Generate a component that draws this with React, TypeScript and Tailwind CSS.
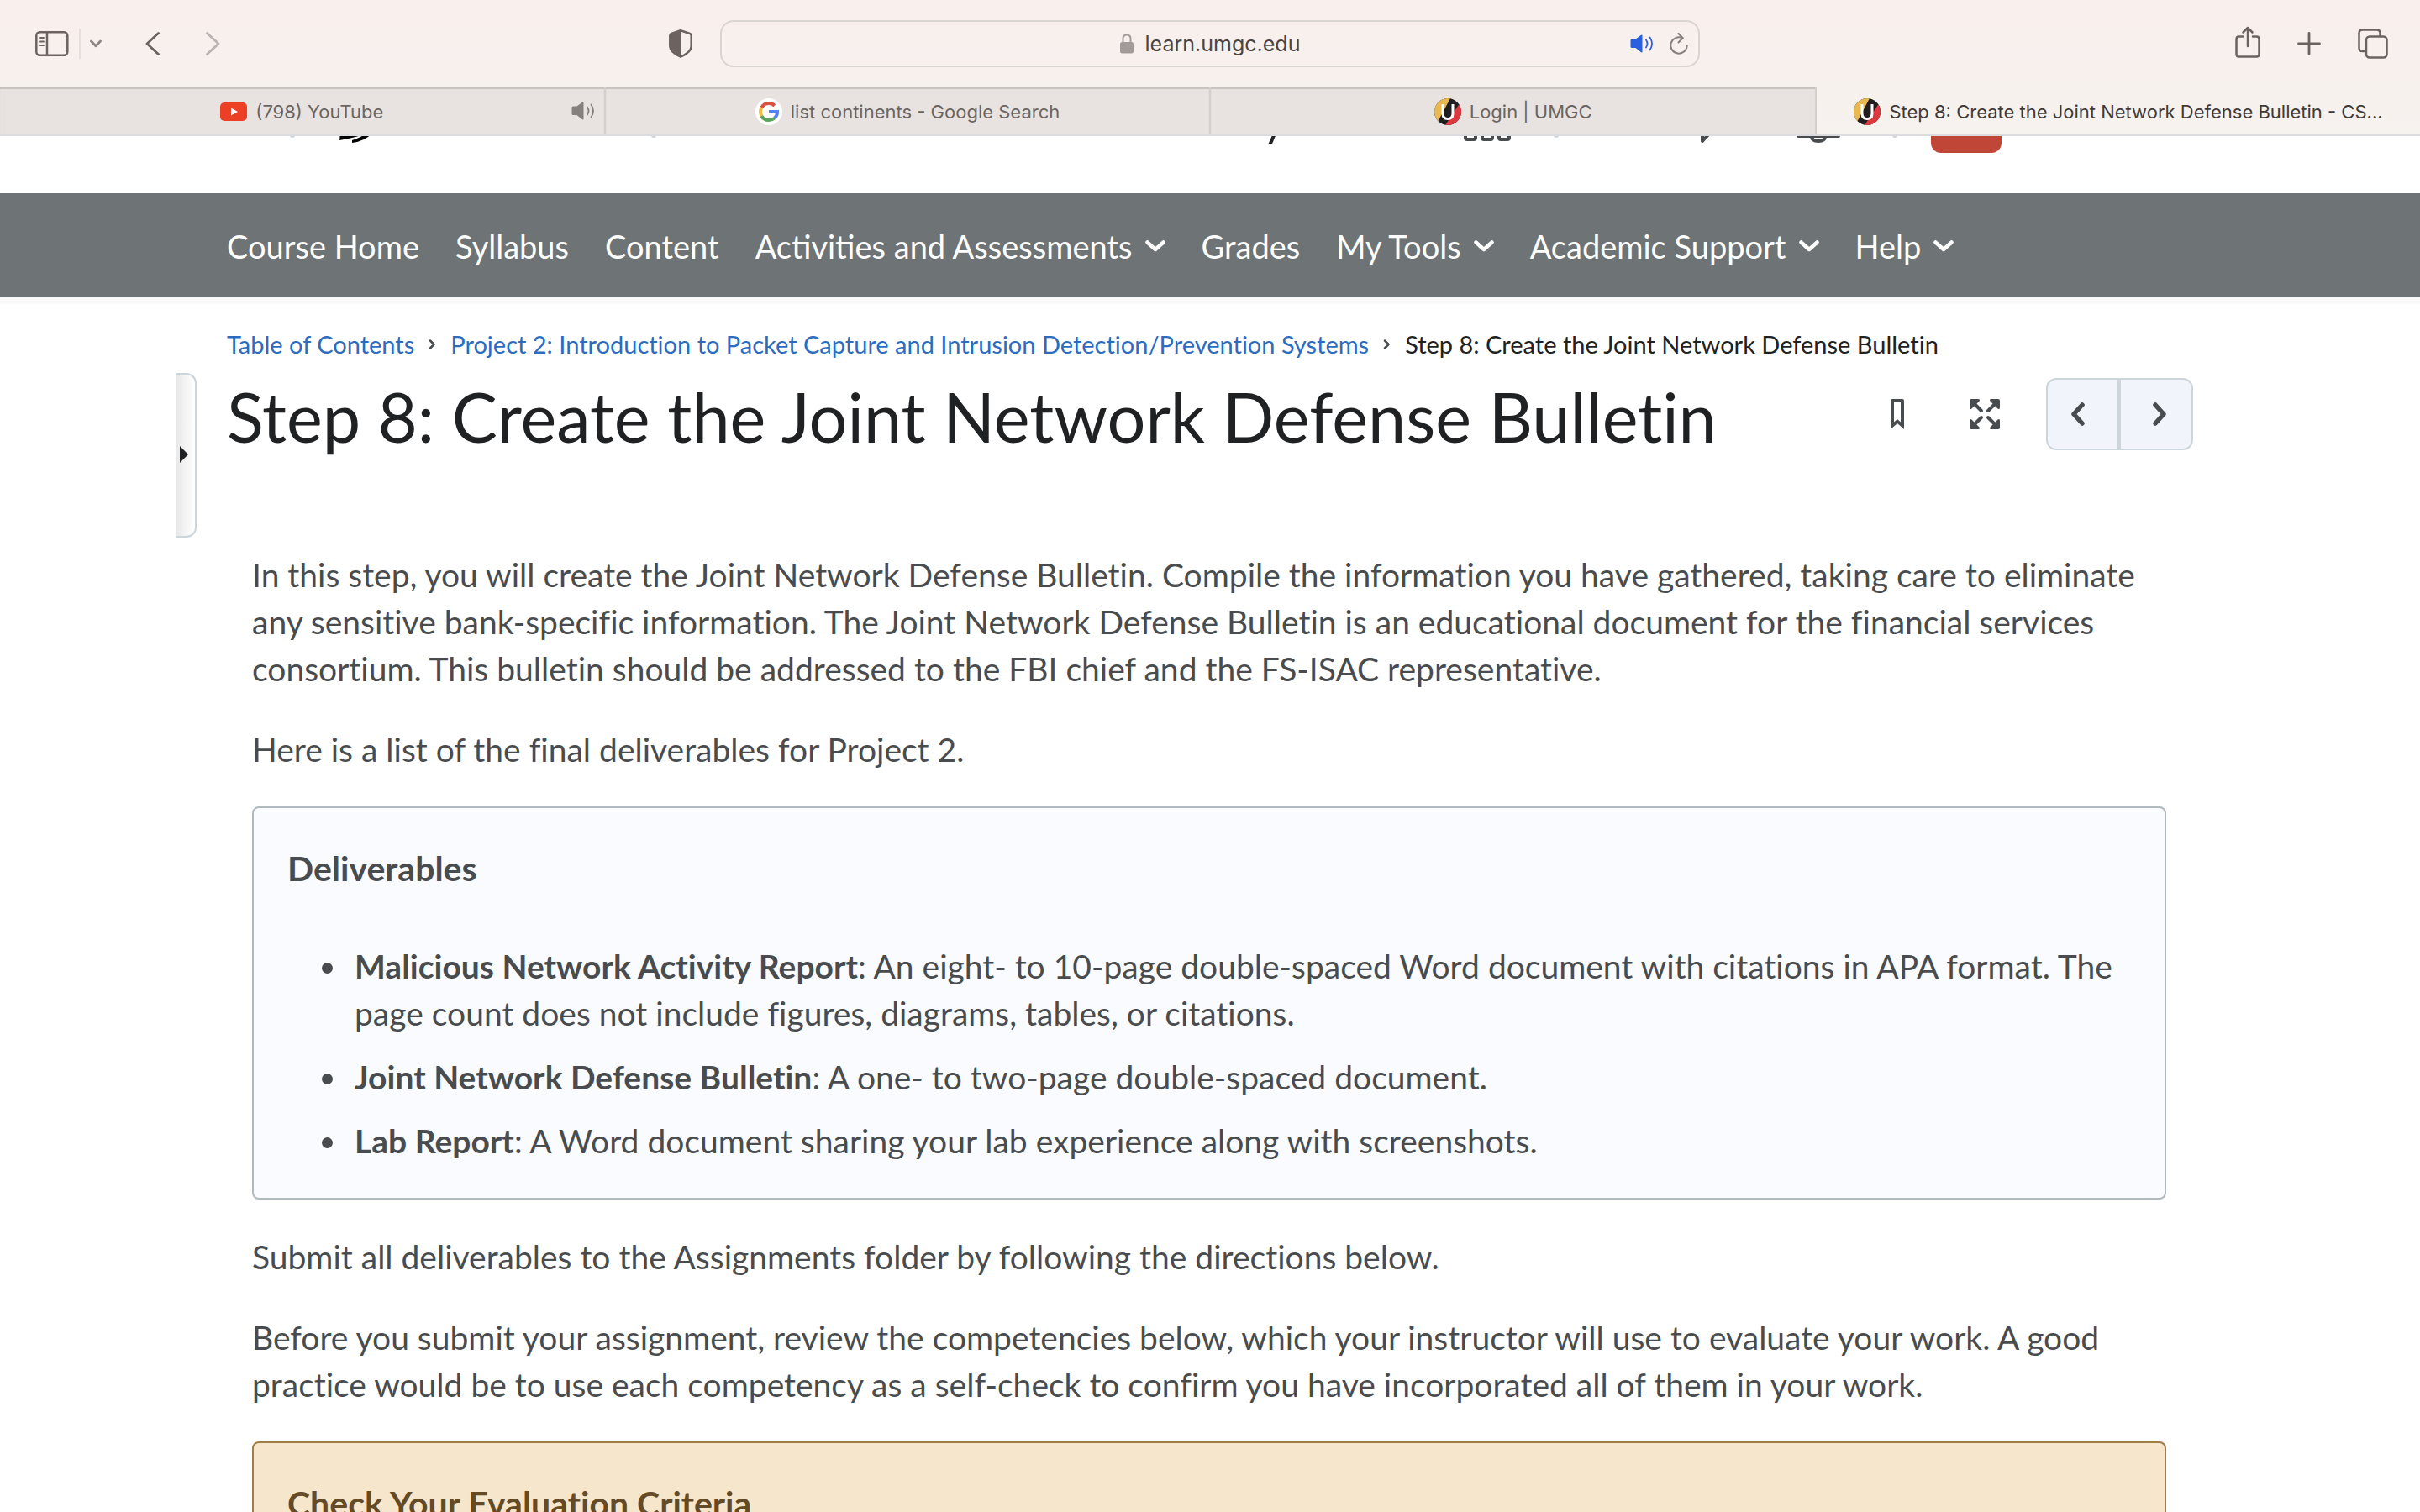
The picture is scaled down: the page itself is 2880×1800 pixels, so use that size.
import { useState } from 'react';
import type { ReactNode } from 'react';

const navLinks = [
  { label: 'Course Home', menu: false },
  { label: 'Syllabus', menu: false },
  { label: 'Content', menu: false },
  { label: 'Activities and Assessments', menu: true },
  { label: 'Grades', menu: false },
  { label: 'My Tools', menu: true },
  { label: 'Academic Support', menu: true },
  { label: 'Help', menu: true },
];

const deliverables = [
  {
    title: 'Malicious Network Activity Report',
    text: ': An eight- to 10-page double-spaced Word document with citations in APA format. The page count does not include figures, diagrams, tables, or citations.',
  },
  { title: 'Joint Network Defense Bulletin', text: ': A one- to two-page double-spaced document.' },
  { title: 'Lab Report', text: ': A Word document sharing your lab experience along with screenshots.' },
];

function SpeakerIcon({ className }: { className: string }) {
  return (
    <svg className={className} viewBox="0 0 27 22" fill="none" stroke="currentColor" strokeWidth="1.8" strokeLinecap="round">
      <path d="M1.5 5.5H6L12.5 0.8Q14 0 14 1.5V20.5Q14 22 12.5 21.2L6 16H1.5Q0 16 0 14.5V7Q0 5.5 1.5 5.5Z" fill="currentColor" stroke="none" />
      <path d="M18.5 6.5Q21.5 11 18.5 15.5M23 3.5Q28 11 23 18.5" />
    </svg>
  );
}

function UmgcIcon() {
  return (
    <svg className="w-8 h-8 shrink-0" viewBox="0 0 32 32">
      <clipPath id="umgcCircle">
        <circle cx="16" cy="16" r="16" />
      </clipPath>
      <g clipPath="url(#umgcCircle)">
        <rect width="32" height="32" fill="#1f1d1d" />
        <path d="M0 0H19L3 30H0Z" fill="#e8b950" />
        <path d="M32 3L13 32H32Z" fill="#dc3840" />
      </g>
      <path d="M10 7V18Q10 24.5 16 24.5Q22 24.5 22 18V7" fill="none" stroke="#fff" strokeWidth="3" />
    </svg>
  );
}

function GoogleIcon() {
  return (
    <svg className="w-8 h-8 shrink-0" viewBox="0 0 32 32" fill="none" strokeWidth="4">
      <circle cx="16" cy="16" r="16" fill="#fff" />
      <path d="M7.3 11Q10 6 16 6Q20 6 22.8 8.7" stroke="#d9523f" />
      <path d="M7.3 21Q4.8 16 7.3 11" stroke="#f2bd42" />
      <path d="M7.3 21Q10 26 16 26Q20 26 22.6 23.6" stroke="#58a55c" />
      <path d="M16 16H26Q26 21 22.6 23.6" stroke="#5383ec" />
    </svg>
  );
}

function YoutubeIcon() {
  return (
    <svg className="w-8 h-[22px] shrink-0" viewBox="0 0 32 22">
      <rect width="32" height="22" rx="5" fill="#eb4026" />
      <path d="M13 6.5L21 11L13 15.5Z" fill="#fff" />
    </svg>
  );
}

interface TabProps {
  icon: ReactNode;
  title: string;
  active: boolean;
  playing?: boolean;
  onSelect: () => void;
}

function Tab({ icon, title, active, playing, onSelect }: TabProps) {
  return (
    <div
      className={`grid grid-cols-[minmax(0,1fr)_auto_minmax(0,1fr)] items-center ${
        active
          ? 'text-[#3f3a38]'
          : 'bg-[#e8e3e0] text-[#6b6562] border-r-2 border-[#d5d0cd] shadow-[inset_0_2px_1px_#c7c1be]'
      }`}
    >
      <span />
      <button type="button" onClick={onSelect} className="flex items-center gap-[10px] h-full pt-px text-[22px] leading-7 whitespace-nowrap">
        {icon}
        {title}
      </button>
      {playing && (
        <button type="button" aria-label="Mute tab" className="justify-self-end mr-[11px] text-[#85807d]">
          <SpeakerIcon className="w-7 h-[22px]" />
        </button>
      )}
    </div>
  );
}

function BrowserBar() {
  const [activeTab, setActiveTab] = useState(3);

  const tabs = [
    { title: '(798) YouTube', icon: <YoutubeIcon />, playing: true },
    { title: 'list continents - Google Search', icon: <GoogleIcon /> },
    { title: 'Login | UMGC', icon: <UmgcIcon /> },
    { title: 'Step 8: Create the Joint Network Defense Bulletin - CS...', icon: <UmgcIcon /> },
  ];

  return (
    <div className="relative z-10 shrink-0 bg-linear-to-b from-[#f9efed] to-[#f6f2ee] border-b-2 border-[#dcdcde] font-['Inter',sans-serif]">
      <div className="grid grid-cols-[1fr_1166px_1fr] items-center h-[104px] text-[#6c6361]">
        <div className="flex items-center pl-[42px] pr-[33px]">
          <button type="button" aria-label="Sidebar">
            <svg className="w-10 h-[30px]" viewBox="0 0 40 30" fill="none" stroke="currentColor" strokeWidth="2.5">
              <rect x="1.3" y="1.3" width="37" height="27.4" rx="4" />
              <path d="M14 1V29" />
              <path d="M6 8H10M6 12.5H10M6 17H10" strokeWidth="1.8" strokeLinecap="round" />
            </svg>
          </button>
          <div className="w-[2px] h-9 ml-3 bg-[#e8dfdd]" />
          <button type="button" aria-label="Tab groups" className="ml-[11px]">
            <svg className="w-[14px] h-[10px]" viewBox="0 0 14 10" fill="none" stroke="#8b8583" strokeWidth="2.8" strokeLinecap="round" strokeLinejoin="round">
              <path d="M1.5 2L7 7.8L12.5 2" />
            </svg>
          </button>
          <button type="button" aria-label="Back" className="ml-[52px]">
            <svg className="w-[17px] h-7" viewBox="0 0 17 28" fill="none" stroke="currentColor" strokeWidth="2.8" strokeLinecap="round" strokeLinejoin="round">
              <path d="M15.5 1.5L2 14L15.5 26.5" />
            </svg>
          </button>
          <button type="button" aria-label="Forward" className="ml-[55px] text-[#bbb3b1]">
            <svg className="w-[17px] h-7" viewBox="0 0 17 28" fill="none" stroke="currentColor" strokeWidth="2.8" strokeLinecap="round" strokeLinejoin="round">
              <path d="M1.5 1.5L15 14L1.5 26.5" />
            </svg>
          </button>
          <button type="button" aria-label="Privacy report" className="ml-auto">
            <svg className="w-7 h-[34px]" viewBox="0 0 28 34">
              <path d="M14 1.3L25 5Q26.7 5.6 26.7 7.5V20Q26.7 27 14 32.7Q1.3 27 1.3 20V7.5Q1.3 5.6 3 5Z" fill="none" stroke="currentColor" strokeWidth="2.5" strokeLinejoin="round" />
              <path d="M14 1V33Q1 27 1 20V7Q1 5.6 3 5Z" fill="currentColor" />
            </svg>
          </button>
        </div>

        <div className="grid grid-cols-[1fr_auto_1fr] items-center h-14 border-2 border-[#dad4d1] rounded-2xl px-3">
          <span />
          <label className="flex items-center gap-[14px]">
            <svg className="w-4 h-6" viewBox="0 0 16 24" fill="none">
              <path d="M3.5 11V6Q3.5 1.5 8 1.5Q12.5 1.5 12.5 6V11" stroke="#a29b99" strokeWidth="2" />
              <rect y="10" width="16" height="13.5" rx="2.5" fill="#a29b99" />
            </svg>
            <input
              type="text"
              aria-label="Address"
              defaultValue="learn.umgc.edu"
              className="field-sizing-content bg-transparent text-[25px] leading-8 text-[#4a4543] outline-none"
            />
          </label>
          <div className="flex items-center justify-end gap-[19px]">
            <button type="button" aria-label="Mute" className="text-[#2a5fe0]">
              <SpeakerIcon className="w-7 h-[22px]" />
            </button>
            <button type="button" aria-label="Reload">
              <svg className="w-[22px] h-[26px]" viewBox="0 0 22 26" fill="none" stroke="#857f7d" strokeWidth="2" strokeLinecap="round" strokeLinejoin="round">
                <path d="M20.7 15A9.7 9.7 0 1 1 15.3 6.3" />
                <path d="M10.5 1L15.8 6.3L10.5 11.5" />
              </svg>
            </button>
          </div>
        </div>

        <div className="flex items-center justify-end gap-11 pr-[38px]">
          <button type="button" aria-label="Share">
            <svg className="w-[30px] h-[38px] mb-1" viewBox="0 0 30 38" fill="none" stroke="currentColor" strokeWidth="2.5" strokeLinecap="round" strokeLinejoin="round">
              <path d="M9 12.5H4.5Q1.5 12.5 1.5 15.5V33.5Q1.5 36.5 4.5 36.5H25.5Q28.5 36.5 28.5 33.5V15.5Q28.5 12.5 25.5 12.5H21" />
              <path d="M15 24V2M9.5 7.5L15 2L20.5 7.5" />
            </svg>
          </button>
          <button type="button" aria-label="New tab">
            <svg className="w-7 h-7" viewBox="0 0 28 28" stroke="currentColor" strokeWidth="2.8" strokeLinecap="round">
              <path d="M14 1.5V26.5M1.5 14H26.5" />
            </svg>
          </button>
          <button type="button" aria-label="Tab overview">
            <svg className="w-9 h-9" viewBox="0 0 36 36" fill="none" stroke="currentColor" strokeWidth="2.5">
              <rect x="10" y="9.5" width="24.5" height="25" rx="4" />
              <path d="M10 27H5.5Q1.5 27 1.5 23V5.5Q1.5 1.5 5.5 1.5H22.5Q26.5 1.5 26.5 5.5V9" />
            </svg>
          </button>
        </div>
      </div>

      <div className="grid grid-cols-[1fr_1fr_1fr_718px] h-14">
        {tabs.map((tab, i) => (
          <Tab key={tab.title} {...tab} active={i === activeTab} onSelect={() => setActiveTab(i)} />
        ))}
      </div>
    </div>
  );
}

function Separator() {
  return <div className="w-[6px] h-[48px] rounded-full bg-[#cdd5dc]" />;
}

/* Course header, scrolled most of the way under the browser bar */
function CourseHeader() {
  return (
    <header className="flex items-center shrink-0 h-[180px] -mt-[112px] px-[270px] text-[#494c4e]">
      <div className="w-[75px]" />
      <Separator />
      <svg className="w-[70px] h-[60px] ml-[34px]" viewBox="0 0 70 60">
        <path d="M20 48H54Q38 54 19 57ZM34 57Q46 53 52 48H58Q50 58 34 60Z" fill="#000" />
      </svg>
      <div className="ml-auto" />
      <Separator />
      <a href="#course" className="ml-[52px] w-[821px] pt-[5px] text-[50px] leading-[56px] text-[#202122] whitespace-nowrap [font-variant-ligatures:none]">
        CST 620 9041 Prevention of Cyber ...
      </a>
      <button type="button" aria-label="Select a course" className="ml-[88px]">
        <svg className="w-14 h-14" viewBox="0 0 56 56" fill="none" stroke="currentColor" strokeWidth="4">
          {[2, 22, 42].map((y) =>
            [2, 22, 42].map((x) => <rect key={`${x}-${y}`} x={x} y={y} width="12" height="12" rx="2" />)
          )}
        </svg>
      </button>
      <div className="ml-[51px]" />
      <Separator />
      <button type="button" aria-label="Messages" className="ml-[156px]">
        <svg className="w-[60px] h-[60px]" viewBox="0 0 60 60" fill="none" stroke="currentColor" strokeWidth="4" strokeLinejoin="round">
          <path d="M4 4H56V44H28L15 58V44H4Z" />
        </svg>
      </button>
      <button type="button" aria-label="Alerts" className="ml-[65px]">
        <svg className="w-[56px] h-[60px]" viewBox="0 0 56 60" fill="none" stroke="currentColor" strokeWidth="4" strokeLinecap="round">
          <path d="M4 52H52M20 52Q20 58 28 58Q36 58 36 52M10 50V24Q10 4 28 4Q46 4 46 24V50" />
        </svg>
      </button>
      <div className="ml-[60px]" />
      <Separator />
      <button type="button" aria-label="Profile" className="w-[84px] h-[84px] ml-[40px] mr-[228px] rounded-xl bg-[#c04638]" />
    </header>
  );
}

function CourseNav() {
  return (
    <nav className="flex items-center shrink-0 gap-[43px] h-[124px] px-[270px] pt-[2px] bg-[#6e7376] text-white text-[38px] leading-[56px] shadow-[0_8px_0_#f9f9f9]">
      {navLinks.map((link) =>
        link.menu ? (
          <button key={link.label} type="button" className="flex items-center gap-[15px]">
            {link.label}
            <svg className="w-6 h-[14px]" viewBox="0 0 24 14" fill="none" stroke="currentColor" strokeWidth="4.5" strokeLinecap="round" strokeLinejoin="round">
              <path d="M2.5 2.5L12 11L21.5 2.5" />
            </svg>
          </button>
        ) : (
          <a key={link.label} href="#nav">
            {link.label}
          </a>
        )
      )}
    </nav>
  );
}

function Crumb() {
  return (
    <svg className="w-[9px] h-3" viewBox="0 0 9 12" fill="none" stroke="#494c4e" strokeWidth="2.5" strokeLinecap="round" strokeLinejoin="round">
      <path d="M2 1.5L6.5 6L2 10.5" />
    </svg>
  );
}

function TopicHeader() {
  return (
    <div>
      <div className="flex items-center gap-[17px] px-[60px] text-[29px] leading-9">
        <a href="#toc" className="text-[#2b6cc0]">Table of Contents</a>
        <Crumb />
        <a href="#project" className="text-[#2b6cc0]">
          Project 2: Introduction to Packet Capture and Intrusion Detection/Prevention Systems
        </a>
        <Crumb />
        <span className="text-[#202122]">Step 8: Create the Joint Network Defense Bulletin</span>
      </div>

      <div className="flex items-start mt-4">
        <button
          type="button"
          aria-label="Open table of contents"
          className="flex items-center w-6 h-[196px] pl-1 pb-[2px] border-2 border-l-0 border-[#cdd5dc] rounded-r-xl bg-linear-to-r from-[#e8e8e8] to-white"
        >
          <svg className="w-[10px] h-5" viewBox="0 0 10 20">
            <path d="M0 0L10 10L0 20Z" fill="#202122" />
          </svg>
        </button>
        <h1 className="ml-9 text-[81px] leading-[104px] text-[#202122]">
          Step 8: Create the Joint Network Defense Bulletin
        </h1>
        <div className="flex items-center ml-auto mt-[6px] mr-[60px] text-[#494c4e]">
          <button type="button" aria-label="Bookmark">
            <svg className="w-4 h-9" viewBox="0 0 16 36">
              <path d="M2 0H14Q16 0 16 2V36L8 29L0 36V2Q0 0 2 0ZM4 4V27.5L8 24L12 27.5V4Z" fill="currentColor" fillRule="evenodd" />
            </svg>
          </button>
          <button type="button" aria-label="Fullscreen" className="ml-[78px]">
            <svg className="w-9 h-9" viewBox="0 0 36 36" fill="currentColor" stroke="currentColor" strokeLinecap="round">
              <path d="M6 6L14 14M30 6L22 14M6 30L14 22M30 30L22 22" strokeWidth="4" />
              <path
                d="M2 0H10Q13 0 11.5 2.5L2.5 11.5Q0 13 0 10V2Q0 0 2 0ZM34 0H26Q23 0 24.5 2.5L33.5 11.5Q36 13 36 10V2Q36 0 34 0ZM2 36H10Q13 36 11.5 33.5L2.5 24.5Q0 23 0 26V34Q0 36 2 36ZM34 36H26Q23 36 24.5 33.5L33.5 24.5Q36 23 36 26V34Q36 36 34 36Z"
                stroke="none"
              />
            </svg>
          </button>
          <div className="flex ml-[55px] h-[86px] w-[175px] border-2 border-[#cdd5dc] rounded-xl bg-[#f1f4fa] divide-x-4 divide-[#cdd5dc]">
            <button type="button" aria-label="Previous" className="flex w-[87px] items-center justify-center pr-3">
              <svg className="w-4 h-7" viewBox="0 0 16 28" fill="none" stroke="currentColor" strokeWidth="5.5" strokeLinecap="round" strokeLinejoin="round">
                <path d="M13 3L3 14L13 25" />
              </svg>
            </button>
            <button type="button" aria-label="Next" className="flex flex-1 items-center justify-center pl-2">
              <svg className="w-4 h-7" viewBox="0 0 16 28" fill="none" stroke="currentColor" strokeWidth="5.5" strokeLinecap="round" strokeLinejoin="round">
                <path d="M3 3L13 14L3 25" />
              </svg>
            </button>
          </div>
        </div>
      </div>
    </div>
  );
}

export default function App() {
  return (
    <div className="flex flex-col h-screen overflow-hidden bg-white font-['Lato',sans-serif]">
      <BrowserBar />
      <CourseHeader />
      <CourseNav />

      <main className="px-[210px] pt-[38px] [font-variant-ligatures:none]">
        <TopicHeader />

        <article className="flex flex-col gap-10 mt-4 pl-[90px] pr-[92px] text-[39px] leading-[56px] text-[#494c4e]">
          <p>
            In this step, you will create the Joint Network Defense Bulletin. Compile the information you have gathered,
            taking care to eliminate any sensitive bank-specific information. The Joint Network Defense Bulletin is an
            educational document for the financial services consortium. This bulletin should be addressed to the FBI
            chief and the FS-ISAC representative.
          </p>
          <p>Here is a list of the final deliverables for Project 2.</p>

          <section className="px-10 pt-11 pb-10 border-2 border-[#b1b9be] rounded-lg bg-[#fafbff]">
            <h2 className="font-bold text-[41px]">Deliverables</h2>
            <ul className="flex flex-col gap-5 mt-[60px] pl-[73px] list-disc">
              {deliverables.map((item) => (
                <li key={item.title} className="pl-[7px]">
                  <strong>{item.title}</strong>
                  {item.text}
                </li>
              ))}
            </ul>
          </section>

          <p>Submit all deliverables to the Assignments folder by following the directions below.</p>
          <p>
            Before you submit your assignment, review the competencies below, which your instructor will use to evaluate
            your work. A good practice would be to use each competency as a self-check to confirm you have incorporated
            all of them in your work.
          </p>

          <section className="px-10 pt-11 pb-10 border-2 border-[#a27c45] rounded-lg bg-[#f6e6cc] text-[#644a25]">
            <h2 className="font-bold text-[41px]">Check Your Evaluation Criteria</h2>
          </section>
        </article>
      </main>
    </div>
  );
}
